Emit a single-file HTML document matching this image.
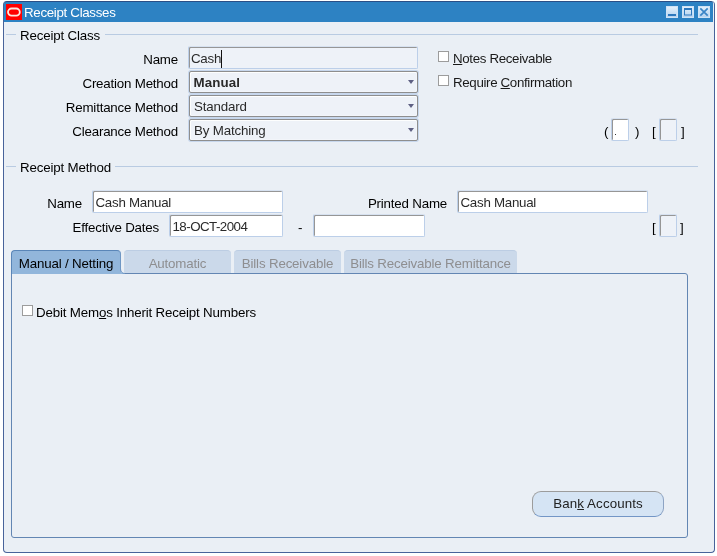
<!DOCTYPE html>
<html>
<head>
<meta charset="utf-8">
<title>Receipt Classes</title>
<style>
html,body{margin:0;padding:0;background:#fff;}
body{width:717px;height:556px;position:relative;overflow:hidden;
  font-family:"Liberation Sans",Arial,sans-serif;font-size:13.33px;letter-spacing:-0.17px;color:#000;
  -webkit-font-smoothing:none;}
*{box-sizing:border-box;}
.abs{position:absolute;}
#root{position:absolute;left:0;top:0;width:717px;height:556px;will-change:transform;}
#win{position:absolute;left:3px;top:1px;width:712px;height:552px;background:#eaeff5;
  border-left:1px solid #48639a;border-right:1px solid #48639a;border-bottom:1px solid #48639a;
  border-radius:4px 4px 4px 4px;}
#title{position:absolute;left:4px;top:1px;width:709px;height:21px;background:#2d82c3;border-top:1px solid #2a4f86;border-radius:3px 2px 0 0;}
#title .txt{position:absolute;left:20px;top:3px;letter-spacing:-0.32px;color:#fff;font-size:13.33px;line-height:15px;white-space:nowrap;}
#logo{position:absolute;left:2px;top:2px;width:16px;height:16px;background:#f00;}
.wb{position:absolute;top:4px;width:12px;height:12px;background:linear-gradient(#e3effa,#b5d3f0);border:1px solid #cfe2f5;}
.lbl{position:absolute;white-space:nowrap;line-height:15px;height:15px;}
.r{text-align:right;letter-spacing:-0.2px;}
.cl{letter-spacing:-0.35px;color:#1a1a1a;}
.fld{position:absolute;white-space:nowrap;color:#2a2a2a;line-height:21px;}
.dd{border:1px solid #8e8e8e;border-radius:2px;background:#eef2f8;box-shadow:inset 1px 1px 0 0 #fdfefe,inset -1px -1px 0 0 #f2f5fa,0 0 0 1px rgba(170,195,230,0.55);padding:0 0 0 4px;height:22px;}
.wf{background:#fff;border:1px solid #bccfe9;border-top-color:#d6e1f0;border-radius:2px;box-shadow:inset 1px 1px 0 #969696;padding:1px 0 0 2.5px;height:23px;letter-spacing:-0.27px;}
.foc{background:#eef2f8;}
.arrow{position:absolute;right:3px;top:8px;width:0;height:0;border-left:3.6px solid transparent;border-right:3.6px solid transparent;border-top:4.2px solid #5e6083;}
.cb{position:absolute;width:11px;height:11px;background:#fff;border:1px solid #9c9c9c;}
.hr{position:absolute;height:1px;background:#b9cbe2;}
.tab{position:absolute;top:250px;height:23px;border-radius:4px 4px 0 0;background:#cbd9ea;border-top:1px solid #bccde3;color:#8e8e90;text-align:center;line-height:25px;white-space:nowrap;}
.tab.act{background:#92b6db;color:#000;border-top:1px solid #5a86b8;border-left:1px solid #5a86b8;border-right:1px solid #6f97c4;border-radius:4px 4px 0 0;}
#panel{position:absolute;left:11px;top:273px;width:677px;height:265px;border:1px solid #6386b3;border-radius:0 3px 3px 3px;}
#btn{position:absolute;left:532px;top:491px;width:132px;height:26px;border:1px solid #9b9b9b;border-color:#9c9c9c #8ea4c4 #7396c6 #9c9c9c;border-radius:9px;background:#d5e4f4;text-align:center;line-height:24px;letter-spacing:0.12px;color:#222;}
u{text-decoration:underline;}
</style>
</head>
<body>
<div id="root">
<div id="win"></div>
<div id="title">
  <div id="logo"><svg width="16" height="16" viewBox="0 0 16 16"><rect x="2" y="4.5" width="11.8" height="7.2" rx="3.6" ry="3.6" fill="none" stroke="#fbe6de" stroke-width="1.8"/></svg></div>
  <div class="txt">Receipt Classes</div>
  <div class="wb" style="left:662px"><svg width="10" height="10" style="position:absolute;left:0;top:0"><rect x="1" y="7" width="8" height="2" fill="#2e78bd"/></svg></div>
  <div class="wb" style="left:678px"><svg width="10" height="10" style="position:absolute;left:0;top:0"><rect x="1.5" y="2" width="7" height="6" fill="none" stroke="#2e78bd" stroke-width="1"/><rect x="1" y="1" width="8" height="2" fill="#2e78bd"/></svg></div>
  <div class="wb" style="left:694px"><svg width="10" height="10" style="position:absolute;left:0;top:0"><path d="M1.3 1.3 L8.7 8.7 M8.7 1.3 L1.3 8.7" stroke="#3a84c6" stroke-width="1.7"/></svg></div>
</div>

<!-- Receipt Class group -->
<div class="hr" style="left:6px;top:34px;width:10px"></div>
<div class="hr" style="left:105px;top:34px;width:593px"></div>
<div class="lbl" style="left:20px;top:28px">Receipt Class</div>

<div class="lbl r" style="left:40px;width:138px;top:52px">Name</div>
<div class="lbl r" style="left:40px;width:138px;top:76px">Creation Method</div>
<div class="lbl r" style="left:40px;width:138px;top:100px">Remittance Method</div>
<div class="lbl r" style="left:40px;width:138px;top:124px">Clearance Method</div>

<div class="fld wf foc" style="left:188px;top:46px;width:230px;padding-left:2px">Cash<span style="position:absolute;left:32px;top:3px;width:1px;height:18px;background:#111"></span></div>
<div class="fld dd" style="left:189px;top:71px;width:229px"><b style="letter-spacing:0.1px;margin-left:-0.5px">Manual</b><div class="arrow"></div></div>
<div class="fld dd" style="left:189px;top:95px;width:229px">Standard<div class="arrow"></div></div>
<div class="fld dd" style="left:189px;top:119px;width:229px">By Matching<div class="arrow"></div></div>

<div class="cb" style="left:438px;top:51px"></div>
<div class="lbl cl" style="left:453px;top:51px"><u>N</u>otes Receivable</div>
<div class="cb" style="left:438px;top:75px"></div>
<div class="lbl cl" style="left:453px;top:75px">Require <u>C</u>onfirmation</div>

<div class="lbl" style="left:604px;top:124px">(</div>
<div class="fld wf" style="left:611px;top:118px;width:18px"></div>
<div class="abs" style="left:615px;top:134px;width:1px;height:1px;background:#333"></div>
<div class="lbl" style="left:635px;top:124px">)</div>
<div class="lbl" style="left:652px;top:124px">[</div>
<div class="fld wf foc" style="left:659px;top:118px;width:18px"></div>
<div class="lbl" style="left:681px;top:124px">]</div>

<!-- Receipt Method group -->
<div class="hr" style="left:6px;top:166px;width:10px"></div>
<div class="hr" style="left:115px;top:166px;width:583px"></div>
<div class="lbl" style="left:20px;top:160px">Receipt Method</div>

<div class="lbl r" style="left:20px;width:62px;top:196px">Name</div>
<div class="fld wf" style="left:92px;top:190px;width:191px">Cash Manual</div>
<div class="lbl r" style="left:340px;width:107px;top:196px">Printed Name</div>
<div class="fld wf" style="left:457px;top:190px;width:191px">Cash Manual</div>

<div class="lbl r" style="left:40px;width:119px;top:220px">Effective Dates</div>
<div class="fld wf" style="left:169px;top:214px;width:114px;letter-spacing:-0.54px">18-OCT-2004</div>
<div class="lbl" style="left:298px;top:220px">-</div>
<div class="fld wf" style="left:313px;top:214px;width:112px"></div>
<div class="lbl" style="left:652px;top:220px">[</div>
<div class="fld wf foc" style="left:659px;top:214px;width:18px"></div>
<div class="lbl" style="left:680px;top:220px">]</div>

<!-- Tabs -->
<div id="panel"></div>
<div class="tab act" style="left:11px;width:110px;height:24px">Manual / Netting</div>
<svg class="abs" style="left:120px;top:269px" width="5" height="5"><path d="M0 0 C0.5 3 2 4.5 5 4.5 L5 5 L0 5 Z" fill="#92b6db"/><path d="M0.5 0 C0.8 2.8 2 4.5 5 4.5" fill="none" stroke="#6f97c4" stroke-width="1"/></svg>
<div class="tab" style="left:124px;width:107px">Automatic</div>
<div class="tab" style="left:234px;width:107px">Bills Receivable</div>
<div class="tab" style="left:344px;width:173px">Bills Receivable Remittance</div>

<div class="cb" style="left:22px;top:305px"></div>
<div class="lbl" style="left:36px;top:305px">Debit Mem<u>o</u>s Inherit Receipt Numbers</div>

<div id="btn">Ban<u>k</u> Accounts</div>
</div>
</body>
</html>
